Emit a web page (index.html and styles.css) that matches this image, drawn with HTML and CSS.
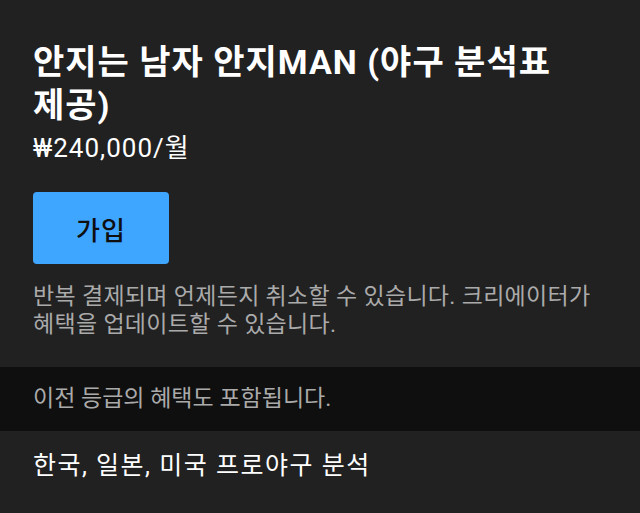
FILE: index.html
```html
<!DOCTYPE html>
<html lang="ko">
<head>
  <meta charset="UTF-8" />
  <meta name="viewport" content="width=device-width, initial-scale=1.0" />
  <title>안지는 남자 안지MAN 멤버십</title>
  <link rel="stylesheet" href="styles.css">
</head>
<body>
  <main class="page">
    <section class="tier">
      <h1 class="tier-title">안지는 남자 안지MAN (야구 분석표 제공)</h1>
      <p class="tier-price">₩240,000/월</p>
      <button class="join-btn" type="button">가입</button>
      <p class="tier-note">반복 결제되며 언제든지 취소할 수 있습니다. 크리에이터가 혜택을 업데이트할 수 있습니다.</p>
    </section>

    <!-- 혜택 안내 -->
    <div class="perks-note">이전 등급의 혜택도 포함됩니다.</div>
    <ul class="perks">
      <li>한국, 일본, 미국 프로야구 분석</li>
    </ul>
  </main>
</body>
</html>
```

FILE: styles.css
```css
html, body { margin: 0; background: #212121; }
body { font-family: Roboto, "Noto Sans CJK KR", sans-serif; color: #fff; word-break: keep-all; }
.page { width: 640px; height: 513px; overflow: hidden; }
.tier { padding: 41px 33px 0; height: 326px; }
.tier-title { margin: 0; font-size: 34px; line-height: 43px; font-weight: 700; letter-spacing: 1px; padding-right: 20px; }
.tier-price { margin: 4px 0 0; font-size: 26px; line-height: 34px; letter-spacing: 1px; }
.join-btn { display: block; margin-top: 27px; width: 136px; height: 72px; border: none; border-radius: 4px; background: #3ea6ff; color: #0f0f0f; font-family: inherit; font-size: 26px; font-weight: 500; letter-spacing: 1px; cursor: pointer; }
.tier-note { margin: 19px 0 0; color: #aaa; font-size: 23px; line-height: 28px; letter-spacing: 0.3px; }
.perks-note { background: #0f0f0f; color: #aaa; font-size: 23px; line-height: 64px; padding: 0 33px; }
.perks { list-style: none; margin: 0; padding: 17px 33px; }
.perks li { font-size: 25px; line-height: 36px; letter-spacing: 1.5px; }
```
